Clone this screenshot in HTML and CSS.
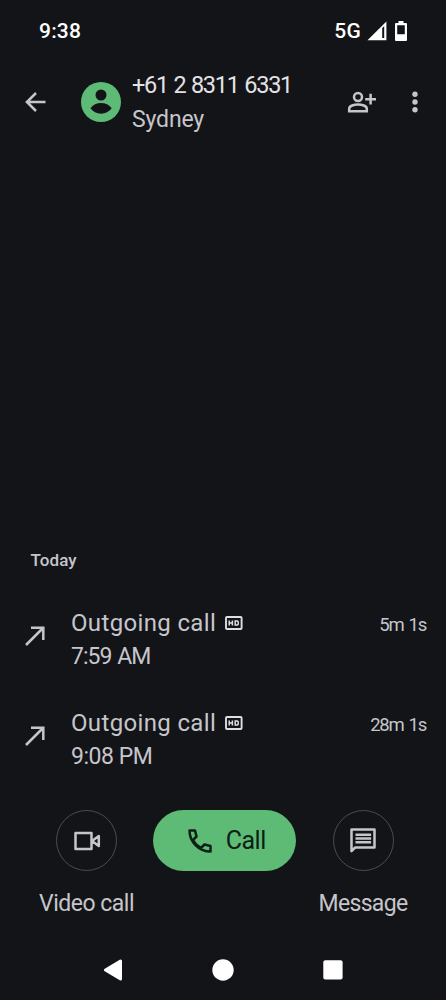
FILE: index.html
```html
<!DOCTYPE html>
<html lang="en">
<head>
<meta charset="utf-8">
<title>Call details</title>
<link rel="stylesheet" href="styles.css">
</head>
<body>
<div class="screen">
  <div class="status">
    <span class="clock">9:38</span>
    <span class="network">5G</span>
    <svg class="signal" width="20" height="20" viewBox="0 0 20 20"><path fill="#fff" fill-rule="evenodd" d="M.5 19.200 19.400.5v18.700zM15.200 7v10h2V5.200z"/></svg>
    <svg class="battery" width="12" height="20" viewBox="0 0 12 20"><path fill="#fff" fill-rule="evenodd" d="M3.500 0h5v2H11q1 0 1 1v16q0 1-1 1H1q-1 0-1-1V3q0-1 1-1h2.500zM2.200 4.200v9h7.600v-9z"/></svg>
  </div>

  <header class="header">
    <svg class="back" width="22" height="22" viewBox="0 0 22 22"><path class="stroke" d="M11 2 1.900 11l9.100 9M2 11h18.500"/></svg>
    <svg class="avatar" width="40" height="40" viewBox="0 0 40 40"><circle cx="20" cy="20" r="20" fill="#5ebb76"/><circle cx="20" cy="13" r="5.500" fill="#131418"/><path fill="#131418" d="M9.500 26.300C14 19.300 26 19.300 30.700 26.300 26 33.500 14 33.500 9.500 26.300z"/></svg>
    <div class="contact">
      <div class="number">+61 2 8311 6331</div>
      <div class="city">Sydney</div>
    </div>
    <svg class="add" width="30" height="22" viewBox="0 0 30 22"><g class="stroke"><circle cx="11" cy="6" r="4"/><path d="M2.200 20.200v-2.400c0-3 5-4.300 8.800-4.300s8.800 1.300 8.800 4.300v2.400zM23.600 2.800v10.800M18.200 8.200h10.800"/></g></svg>
    <svg class="more" width="6" height="22" viewBox="0 0 6 22"><g fill="#c6c6ca"><circle cx="3" cy="3.200" r="2.700"/><circle cx="3" cy="11" r="2.700"/><circle cx="3" cy="18.700" r="2.700"/></g></svg>
  </header>

  <main class="history">
    <h2 class="day">Today</h2>
    <div class="entry">
      <svg class="arrow" width="20" height="20" viewBox="0 0 20 20"><path class="stroke" d="M1 19 18 2M6 1.700h12.300V14"/></svg>
      <div class="info">
        <div class="kind"><span class="outgoing">Outgoing call</span>
          <svg class="hd" width="18" height="14" viewBox="0 0 18 14"><g fill="none" stroke="#dedee1"><rect x="1" y="1" width="15.600" height="12" rx="1" stroke-width="1.900"/><path stroke-width="1.500" d="M4.200 4.500v5M7.400 4.500v5M4.200 7h3.200M10.200 5h2.200l.8.800v2.500l-.8.800h-2.200z"/></g></svg>
        </div>
        <div class="time am">7:59 AM</div>
      </div>
      <div class="duration">5m 1s</div>
    </div>
    <div class="entry">
      <svg class="arrow" width="20" height="20" viewBox="0 0 20 20"><path class="stroke" d="M1 19 18 2M6 1.700h12.300V14"/></svg>
      <div class="info">
        <div class="kind"><span class="outgoing">Outgoing call</span>
          <svg class="hd" width="18" height="14" viewBox="0 0 18 14"><g fill="none" stroke="#dedee1"><rect x="1" y="1" width="15.600" height="12" rx="1" stroke-width="1.900"/><path stroke-width="1.500" d="M4.200 4.500v5M7.400 4.500v5M4.200 7h3.200M10.200 5h2.200l.8.800v2.500l-.8.800h-2.200z"/></g></svg>
        </div>
        <div class="time pm">9:08 PM</div>
      </div>
      <div class="duration">28m 1s</div>
    </div>
  </main>

  <div class="actions">
    <div class="action">
      <div class="round"><svg width="28" height="20" viewBox="0 0 28 20"><path class="stroke" stroke-linejoin="round" d="M2.500 2h16v16h-16zM19 10l6.800-5v10z"/></svg></div>
      <span class="label video">Video call</span>
    </div>
    <div class="call">
      <svg width="24" height="24" viewBox="0 0 24 24"><path fill="none" stroke="#0b2114" stroke-width="2.500" stroke-linejoin="round" d="M1.500 1.500h5.500l1.500 6-3.400 3.400c1.800 3.800 4.200 6.200 8 8l3.400-3.400 6 1.500v5.500C11 22.500 1.500 13 1.500 1.500z"/></svg>
      <span class="call-text">Call</span>
    </div>
    <div class="action">
      <div class="round"><svg width="26" height="26" viewBox="0 0 26 26"><path class="stroke" stroke-linejoin="round" d="M1.500 1.500h23v18H5.200l-3.700 3.700z"/><path class="stroke" d="M5.500 6.700h15.600M5.500 10.500h15.600M5.500 14.300h15.600"/></svg></div>
      <span class="label message">Message</span>
    </div>
  </div>

  <nav class="nav">
    <svg width="20" height="22" viewBox="0 0 20 22"><path fill="#fff" stroke="#fff" stroke-width="3" stroke-linejoin="round" d="M2.500 11 17.500 2v18z"/></svg>
    <svg width="22" height="22" viewBox="0 0 22 22"><circle cx="11" cy="11" r="10.700" fill="#fff"/></svg>
    <svg width="20" height="20" viewBox="0 0 20 20"><rect x=".3" y=".3" width="19.300" height="19.300" rx="2" fill="#fff"/></svg>
  </nav>
</div>
</body>
</html>
```
FILE: styles.css
```css
* { box-sizing: border-box; }
body { margin: 0; background: #131418; color: #c6c6ca; font-family: Roboto, "Liberation Sans", sans-serif; }
svg { display: block; flex: none; }
.screen { width: 446px; height: 1000px; display: flex; flex-direction: column; overflow: hidden; white-space: nowrap; }
.stroke { fill: none; stroke: #c6c6ca; stroke-width: 2.500; }

.status { height: 62px; padding: 0 39px; display: flex; align-items: center; color: #fff; font-weight: 500; }
.clock { font-size: 21px; letter-spacing: .2px; margin-right: auto; }
.network { font-size: 21px; letter-spacing: .2px; margin-right: 5.5px; }
.signal { margin-right: 8.500px; }

.header { height: 80px; padding: 0 28px 0 25px; display: flex; align-items: center; }
.avatar { margin-left: 34px; }
.contact { margin-left: 11px; margin-right: auto; line-height: 34px; }
.number { font-size: 23.5px; letter-spacing: -1.25px; word-spacing: .9px; color: #e2e2e6; }
.city { font-size: 23px; letter-spacing: -.15px; line-height: 35px; }
.more { margin-left: 35px; }

.history { flex: 1; display: flex; flex-direction: column; justify-content: flex-end; }
.day { margin: 0 0 10.5px 30.5px; font-size: 17px; line-height: 32px; font-weight: 500; letter-spacing: .1px; }
.entry { height: 99.5px; padding: 0 20px 0 25px; display: flex; align-items: center; }
.arrow { margin: 1px 26px 0 0; }
.info { margin-right: auto; padding-top: 9.5px; line-height: 34px; }
.kind { display: flex; align-items: center; font-size: 24px; letter-spacing: .35px; }
.hd { margin-left: 8.500px; }
.time { font-size: 23px; line-height: 34.5px; }
.am { letter-spacing: -.95px; word-spacing: 1px; }
.pm { letter-spacing: -.45px; }
.duration { font-size: 18.5px; letter-spacing: -1.2px; word-spacing: 1.5px; line-height: 34px; align-self: flex-start; margin: 22px 0 0; }

.actions { height: 154px; padding: 25px 35px 0 38.5px; display: flex; justify-content: space-between; }
.action { width: 96px; display: flex; flex-direction: column; align-items: center; }
.round { width: 61px; height: 61px; border: 1px solid #4b4c51; border-radius: 50%; display: grid; place-items: center; }
.label { font-size: 23px; line-height: 32px; margin-top: 17px; }
.video { letter-spacing: -.5px; }
.message { letter-spacing: -.65px; }
.call { width: 143px; height: 61px; border-radius: 31px; background: #5ebb76; color: #0b2114; display: flex; align-items: center; justify-content: center; gap: 14px; padding-left: 4px; }
.call-text { font-size: 25px; letter-spacing: -.5px; }

.nav { height: 61px; padding: 0 103px; display: flex; align-items: center; justify-content: space-between; }
```
